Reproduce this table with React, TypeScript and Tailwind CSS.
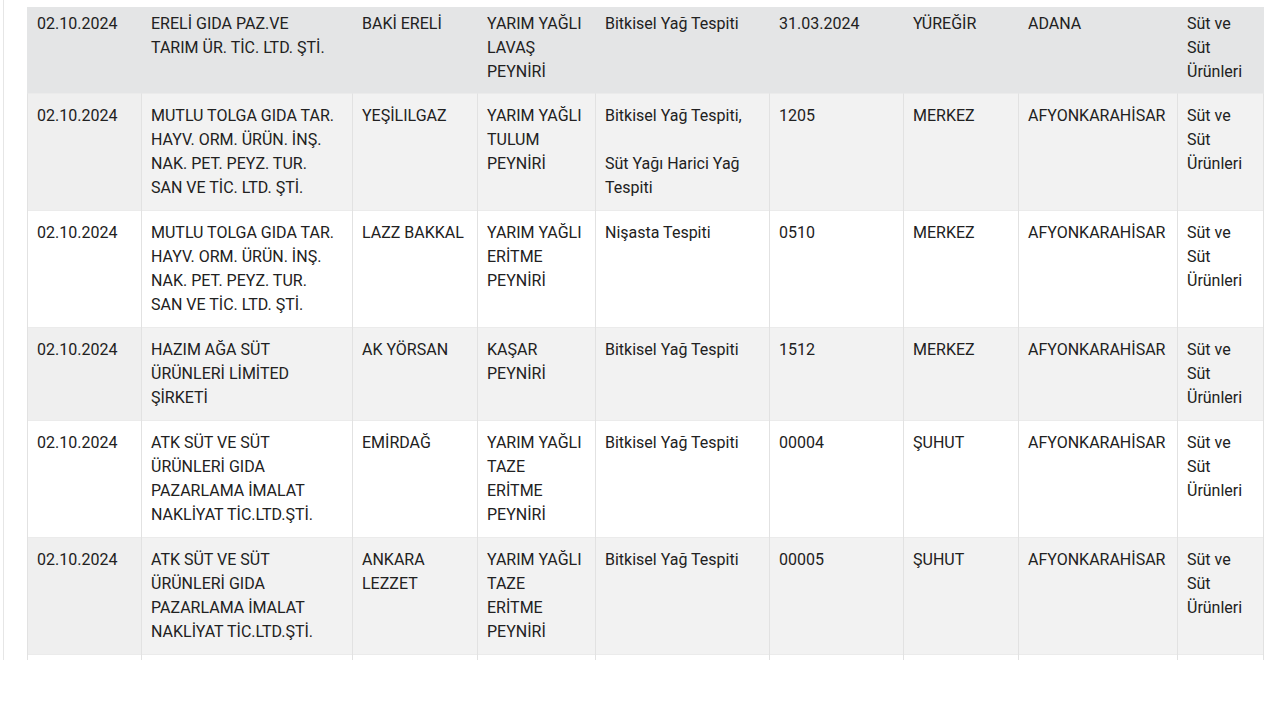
import React from "react";

type Row = { cells: React.ReactNode[]; bg: string; first: string };

const rows: Row[] = [
  {
    bg: "bg-[#e4e5e6]",
    first: "bg-[#e4e5e6]",
    cells: [
      "02.10.2024",
      "ERELİ GIDA PAZ.VE TARIM ÜR. TİC. LTD. ŞTİ.",
      "BAKİ ERELİ",
      "YARIM YAĞLI LAVAŞ PEYNİRİ",
      "Bitkisel Yağ Tespiti",
      "31.03.2024",
      "YÜREĞİR",
      "ADANA",
      "Süt ve Süt Ürünleri",
    ],
  },
  {
    bg: "bg-[#f2f2f2]",
    first: "bg-[#efefef]",
    cells: [
      "02.10.2024",
      "MUTLU TOLGA GIDA TAR. HAYV. ORM. ÜRÜN. İNŞ. NAK. PET. PEYZ. TUR. SAN VE TİC. LTD. ŞTİ.",
      "YEŞİLILGAZ",
      "YARIM YAĞLI TULUM PEYNİRİ",
      <>
        Bitkisel Yağ Tespiti,
        <br />
        <br />
        Süt Yağı Harici Yağ Tespiti
      </>,
      "1205",
      "MERKEZ",
      "AFYONKARAHİSAR",
      "Süt ve Süt Ürünleri",
    ],
  },
  {
    bg: "bg-white",
    first: "bg-white",
    cells: [
      "02.10.2024",
      "MUTLU TOLGA GIDA TAR. HAYV. ORM. ÜRÜN. İNŞ. NAK. PET. PEYZ. TUR. SAN VE TİC. LTD. ŞTİ.",
      "LAZZ BAKKAL",
      "YARIM YAĞLI ERİTME PEYNİRİ",
      "Nişasta Tespiti",
      "0510",
      "MERKEZ",
      "AFYONKARAHİSAR",
      "Süt ve Süt Ürünleri",
    ],
  },
  {
    bg: "bg-[#f2f2f2]",
    first: "bg-[#efefef]",
    cells: [
      "02.10.2024",
      "HAZIM AĞA SÜT ÜRÜNLERİ LİMİTED ŞİRKETİ",
      "AK YÖRSAN",
      "KAŞAR PEYNİRİ",
      "Bitkisel Yağ Tespiti",
      "1512",
      "MERKEZ",
      "AFYONKARAHİSAR",
      "Süt ve Süt Ürünleri",
    ],
  },
  {
    bg: "bg-white",
    first: "bg-white",
    cells: [
      "02.10.2024",
      "ATK SÜT VE SÜT ÜRÜNLERİ GIDA PAZARLAMA İMALAT NAKLİYAT TİC.LTD.ŞTİ.",
      "EMİRDAĞ",
      "YARIM YAĞLI TAZE ERİTME PEYNİRİ",
      "Bitkisel Yağ Tespiti",
      "00004",
      "ŞUHUT",
      "AFYONKARAHİSAR",
      "Süt ve Süt Ürünleri",
    ],
  },
  {
    bg: "bg-[#f2f2f2]",
    first: "bg-[#efefef]",
    cells: [
      "02.10.2024",
      "ATK SÜT VE SÜT ÜRÜNLERİ GIDA PAZARLAMA İMALAT NAKLİYAT TİC.LTD.ŞTİ.",
      "ANKARA LEZZET",
      "YARIM YAĞLI TAZE ERİTME PEYNİRİ",
      "Bitkisel Yağ Tespiti",
      "00005",
      "ŞUHUT",
      "AFYONKARAHİSAR",
      "Süt ve Süt Ürünleri",
    ],
  },
  {
    bg: "bg-white",
    first: "bg-white",
    cells: ["", "", "", "", "", "", "", "", ""],
  },
];

const widths = ["w-[114px]", "w-[211px]", "w-[125px]", "w-[118px]", "w-[174px]", "w-[134px]", "w-[115px]", "w-[159px]", "w-[86px]"];
const padR = ["pr-[10px]", "pr-[14px]", "pr-[10px]", "pr-[11px]", "pr-[10px]", "pr-[10px]", "pr-[10px]", "pr-[10px]", "pr-[10px]"];

export default function App() {
  return (
    <div className="w-[1280px] h-[720px] bg-white" style={{ fontFamily: "Roboto, 'Noto Sans', Arial, sans-serif" }}>
      <div className="ml-[3px] h-[660px] overflow-hidden border-l border-[#e6e6e6] pl-[23px] pt-[7px]">
        <table className="w-[1236px] table-fixed border-collapse text-[16px] leading-[24px] text-[#212121]">
          <colgroup>
            {widths.map((w, i) => (
              <col key={i} className={w} />
            ))}
          </colgroup>
          <tbody>
            {rows.map((r, ri) => (
              <tr key={ri} className={`${r.bg} border-b border-[#ebebeb]`}>
                {r.cells.map((c, ci) => (
                  <td
                    key={ci}
                    className={`align-top pl-[9px] ${padR[ci]} ${ci === 0 ? r.first : ""} ${
                      ri === 0 ? "pt-[5px] pb-[9px] border-x border-[#e4e5e6]" : "py-[10px] border-x border-[#e2e2e2]"
                    }`}
                  >
                    {c}
                  </td>
                ))}
              </tr>
            ))}
          </tbody>
        </table>
      </div>
    </div>
  );
}
